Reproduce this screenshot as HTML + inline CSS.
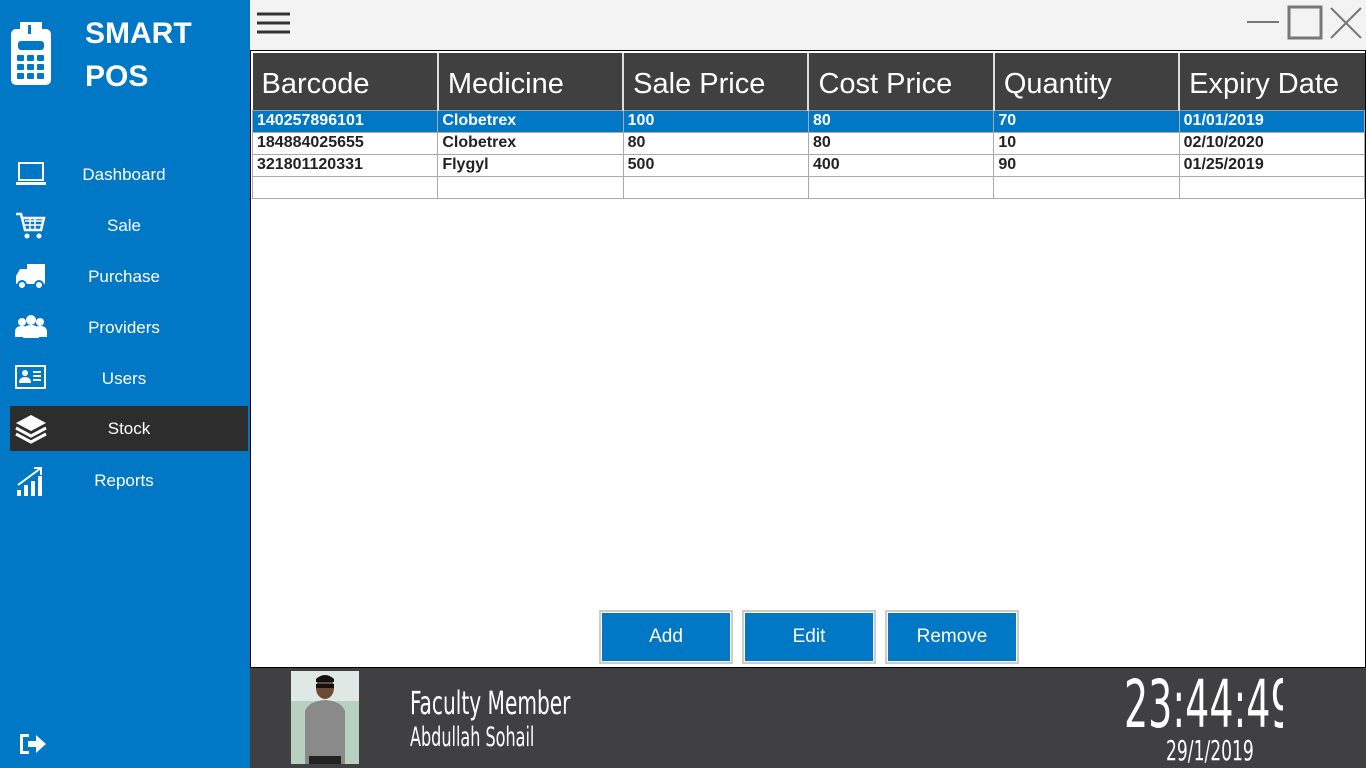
<!DOCTYPE html>
<html><head><meta charset="utf-8"><style>
*{margin:0;padding:0;box-sizing:border-box}
body{width:1366px;height:768px;overflow:hidden;font-family:"Liberation Sans",sans-serif;background:#f3f3f3;position:relative}
.side{position:absolute;left:0;top:0;width:250px;height:768px;background:#0078c6}
.logo{position:absolute;left:85px;top:12px;color:#fff;font-weight:bold;font-size:30px;line-height:43px}
.nav{position:absolute;left:10px;width:238px;height:45px;color:#fff;font-size:17px;line-height:45px}
.nav span{position:absolute;left:0;width:228px;text-align:center}
.nav svg{position:absolute;left:5px;top:8px}
.main{position:absolute;left:250px;top:50px;width:1116px;height:618px;background:#fff;border:1px solid #000}
table{position:absolute;left:1px;top:2px;border-collapse:collapse;width:1113px;table-layout:fixed}
th{background:#404040;color:#fff;font-weight:normal;font-size:29px;text-align:left;padding-left:9px;padding-top:6px;height:57px;border-left:2px solid #ddd;border-bottom:1px solid #999}
th:first-child{border-left:none}
td{height:22px;font-size:16px;font-weight:bold;color:#222;padding-left:4px;border:1px solid #aaa}
tr.sel td{background:#0078c6;color:#fff}
.btn{position:absolute;top:559px;width:134px;height:54px;border:2px solid #ccc;background:#0078c6;color:#fff;font-size:19px;text-align:center;line-height:50px;box-shadow:inset 0 0 0 1px #fff}
.bot{position:absolute;left:250px;top:668px;width:1116px;height:100px;background:#404042;color:#fff}
.cond{font-family:"Liberation Sans Narrow","DejaVu Sans Condensed",sans-serif;transform-origin:0 0;white-space:nowrap;position:absolute}
</style></head><body>
<div class="side">
<svg style="position:absolute;left:10px;top:22px" width="42" height="64" viewBox="0 0 42 64"><rect x="1" y="7" width="40" height="56" rx="5" fill="#fff"/><rect x="10" y="0" width="22" height="14" fill="#fff"/><rect x="18" y="3" width="3" height="9" fill="#0078c6"/><rect x="8" y="19" width="26" height="9" rx="3" fill="#0078c6"/><g fill="#0078c6"><rect x="7" y="33" width="7" height="6" rx="1"/><rect x="17" y="33" width="7" height="6" rx="1"/><rect x="27" y="33" width="7" height="6" rx="1"/><rect x="7" y="42" width="7" height="6" rx="1"/><rect x="17" y="42" width="7" height="6" rx="1"/><rect x="27" y="42" width="7" height="6" rx="1"/><rect x="7" y="51" width="7" height="6" rx="1"/><rect x="17" y="51" width="7" height="6" rx="1"/><rect x="27" y="51" width="7" height="6" rx="1"/></g></svg>
<div class="logo">SMART<br>POS</div>
<div class="nav" style="top:152px"><svg width="32" height="28"><rect x="4" y="3" width="24" height="17" fill="none" stroke="#fff" stroke-width="2"/><rect x="1" y="22" width="30" height="3" fill="#fff"/></svg><span>Dashboard</span></div>
<div class="nav" style="top:203px"><svg width="32" height="30"><path d="M1 3h5l4 16h16l3-12H8" fill="none" stroke="#fff" stroke-width="2.5"/><path d="M10 10h17M10 14h17M15 7v12M20 7v12" stroke="#fff" stroke-width="1.5"/><circle cx="12" cy="25" r="2.5" fill="#fff"/><circle cx="24" cy="25" r="2.5" fill="#fff"/></svg><span>Sale</span></div>
<div class="nav" style="top:254px"><svg width="32" height="30"><rect x="12" y="2" width="18" height="20" fill="#fff"/><path d="M1 22V14l4-7h7v15z" fill="#fff"/><circle cx="7" cy="23" r="4" fill="#fff" stroke="#0078c6" stroke-width="2"/><circle cx="24" cy="23" r="4" fill="#fff" stroke="#0078c6" stroke-width="2"/></svg><span>Purchase</span></div>
<div class="nav" style="top:305px"><svg width="32" height="30"><circle cx="16" cy="7" r="5" fill="#fff"/><circle cx="7" cy="9" r="4" fill="#fff"/><circle cx="25" cy="9" r="4" fill="#fff"/><path d="M0 24v-5q0-6 7-6t7 6v5zM18 24v-5q0-6 7-6t7 6v5zM8 25v-6q0-7 8-7t8 7v6z" fill="#fff"/></svg><span>Providers</span></div>
<div class="nav" style="top:356px"><svg width="32" height="30"><rect x="1" y="2" width="29" height="22" fill="none" stroke="#fff" stroke-width="2"/><circle cx="10" cy="9" r="3" fill="#fff"/><path d="M4 19q0-6 6-6t6 6z" fill="#fff"/><path d="M18 8h8M18 12h8M18 16h8" stroke="#fff" stroke-width="2"/></svg><span>Users</span></div>
<div class="nav" style="top:406px;background:#2d2d2d"><svg width="32" height="32"><path d="M16 1l15 8-15 8-15-8z" fill="#fff"/><path d="M1 14l15 8 15-8M1 20l15 8 15-8" fill="none" stroke="#fff" stroke-width="3"/></svg><span style="left:5px">Stock</span></div>
<div class="nav" style="top:458px"><svg width="32" height="32"><rect x="2" y="24" width="4" height="6" fill="#fff"/><rect x="9" y="19" width="4" height="11" fill="#fff"/><rect x="16" y="15" width="4" height="15" fill="#fff"/><rect x="23" y="10" width="4" height="20" fill="#fff"/><path d="M3 19L26 2M19 2h7v7" fill="none" stroke="#fff" stroke-width="2"/></svg><span>Reports</span></div>
<svg style="position:absolute;left:18px;top:731px" width="30" height="26"><path d="M2 3h9v3H5v14h6v3H2z" fill="#fff"/><path d="M10 10h8V4l10 9-10 9v-6h-8z" fill="#fff"/></svg>
</div>
<svg style="position:absolute;left:257px;top:12px" width="34" height="24"><path d="M0 2h33M0 11h33M0 20h33" stroke="#333" stroke-width="3"/></svg>
<svg style="position:absolute;left:1240px;top:0" width="126" height="44"><path d="M7 22h32" stroke="#777" stroke-width="2"/><rect x="49" y="7" width="32" height="31" fill="none" stroke="#777" stroke-width="3"/><path d="M91 8l30 30M121 8L91 38" stroke="#777" stroke-width="2"/></svg>
<div class="main">
<table>
<tr><th>Barcode</th><th>Medicine</th><th>Sale Price</th><th>Cost Price</th><th>Quantity</th><th>Expiry Date</th></tr>
<tr class="sel"><td>140257896101</td><td>Clobetrex</td><td>100</td><td>80</td><td>70</td><td>01/01/2019</td></tr>
<tr><td>184884025655</td><td>Clobetrex</td><td>80</td><td>80</td><td>10</td><td>02/10/2020</td></tr>
<tr><td>321801120331</td><td>Flygyl</td><td>500</td><td>400</td><td>90</td><td>01/25/2019</td></tr>
<tr><td></td><td></td><td></td><td></td><td></td><td></td></tr>
</table>
<div class="btn" style="left:348px">Add</div>
<div class="btn" style="left:491px">Edit</div>
<div class="btn" style="left:634px">Remove</div>
</div>
<div class="bot">
<svg style="position:absolute;left:41px;top:3px" width="68" height="93"><rect width="68" height="93" fill="#b8d0c0"/><rect y="0" width="68" height="30" fill="#dfe8e4"/><path d="M14 93V40q4-10 20-11 16 1 20 11v53z" fill="#8a8a8a"/><ellipse cx="34" cy="17" rx="9" ry="11" fill="#6b4a35"/><rect x="25" y="13" width="18" height="4" fill="#111"/><path d="M25 8q9-8 18 0v3H25z" fill="#111"/><rect x="18" y="85" width="32" height="8" fill="#222"/></svg>
<div class="cond" style="left:160px;top:16px;font-size:32px;transform:scaleX(0.7)">Faculty Member</div>
<div class="cond" style="left:160px;top:54px;font-size:27px;transform:scaleX(0.66)">Abdullah Sohail</div>
<div style="position:absolute;left:874px;top:4px;width:159px;height:66px;overflow:hidden"><div class="cond" style="left:0;top:0;font-size:66px;line-height:66px;transform:scaleX(0.64)">23:44:49</div></div>
<div class="cond" style="left:916px;top:66px;font-size:28px;transform:scaleX(0.68)">29/1/2019</div>
</div>
</body></html>
